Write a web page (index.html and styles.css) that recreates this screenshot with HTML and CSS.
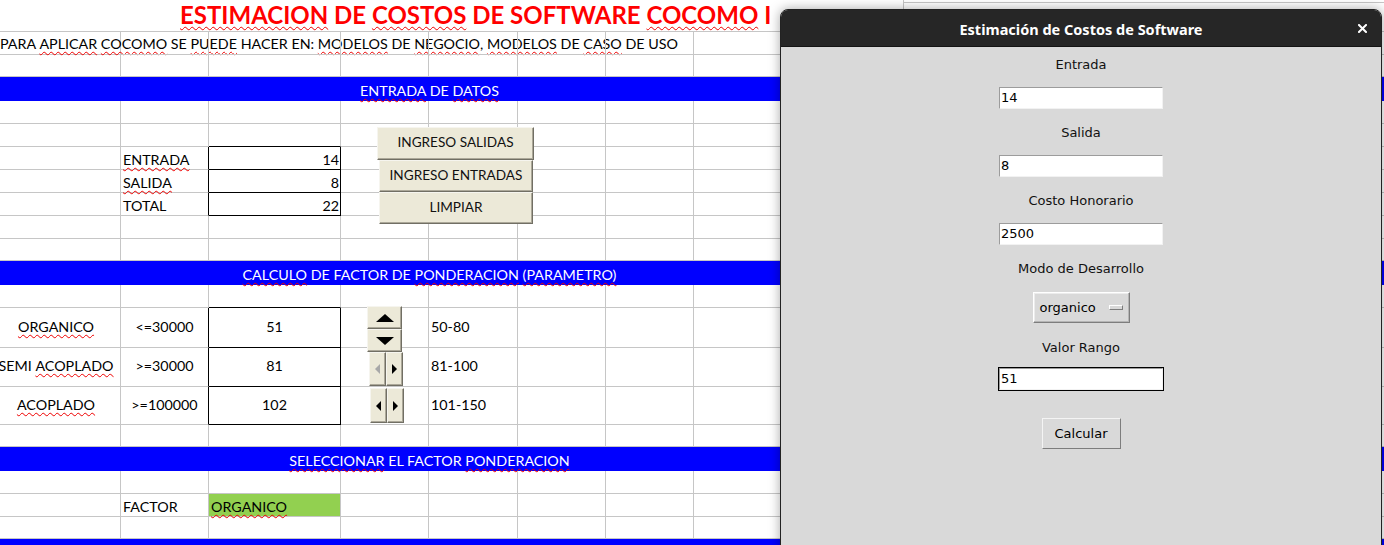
FILE: index.html
```html
<!DOCTYPE html>
<html lang="es">
<head>
<meta charset="utf-8">
<title>Estimacion de Costos de Software COCOMO I</title>
<link rel="stylesheet" href="styles.css">
</head>
<body>
<div class="screen">
  <div class="sheet">
    <div class="title-row">
      <div class="title-main"><span class="sp">ESTIMACION</span>&nbsp;DE&nbsp;<span class="sp">COSTOS</span>&nbsp;DE&nbsp;SOFTWARE&nbsp;<span class="sp">COCOMO</span>&nbsp;I</div>
      <div class="title-rest"></div>
    </div>

    <div class="row h23">
      <div class="c pl0">PARA&nbsp;<span class="sp">APLICAR</span>&nbsp;<span class="sp">COCOMO</span>&nbsp;SE&nbsp;<span class="sp">PUEDE</span>&nbsp;HACER&nbsp;EN:&nbsp;<span class="sp">MODELOS</span>&nbsp;DE&nbsp;<span class="sp">NEGOCIO</span>,&nbsp;<span class="sp">MODELOS</span>&nbsp;DE&nbsp;<span class="sp">CASO</span>&nbsp;DE&nbsp;USO</div>
      <div class="c"></div><div class="c"></div><div class="c"></div><div class="c"></div><div class="c"></div><div class="c"></div><div class="c"></div><div class="c"></div><div class="c"></div><div class="c"></div><div class="c"></div><div class="c"></div><div class="c"></div><div class="c"></div><div class="c"></div>
    </div>
    <div class="row h22">
      <div class="c"></div><div class="c"></div><div class="c"></div><div class="c"></div><div class="c"></div><div class="c"></div><div class="c"></div><div class="c"></div><div class="c"></div><div class="c"></div><div class="c"></div><div class="c"></div><div class="c"></div><div class="c"></div><div class="c"></div><div class="c"></div>
    </div>

    <div class="bar"><div class="bar-text"><span class="sp">ENTRADA</span> DE <span class="sp">DATOS</span></div></div>

    <div class="row h23">
      <div class="c"></div><div class="c"></div><div class="c"></div><div class="c"></div><div class="c"></div><div class="c"></div><div class="c"></div><div class="c"></div><div class="c"></div><div class="c"></div><div class="c"></div><div class="c"></div><div class="c"></div><div class="c"></div><div class="c"></div><div class="c"></div>
    </div>
    <div class="row h23">
      <div class="c"></div><div class="c"></div><div class="c bk-b"></div><div class="c"></div><div class="c"></div><div class="c"></div><div class="c"></div><div class="c"></div><div class="c"></div><div class="c"></div><div class="c"></div><div class="c"></div><div class="c"></div><div class="c"></div><div class="c"></div><div class="c"></div>
    </div>
    <div class="row h23">
      <div class="c"></div><div class="c bk-r"><span class="sp">ENTRADA</span></div><div class="c rt bk-r bk-b">14</div><div class="c"></div><div class="c"></div><div class="c"></div><div class="c"></div><div class="c"></div><div class="c"></div><div class="c"></div><div class="c"></div><div class="c"></div><div class="c"></div><div class="c"></div><div class="c"></div><div class="c"></div>
    </div>
    <div class="row h23">
      <div class="c"></div><div class="c bk-r"><span class="sp">SALIDA</span></div><div class="c rt bk-r bk-b">8</div><div class="c"></div><div class="c"></div><div class="c"></div><div class="c"></div><div class="c"></div><div class="c"></div><div class="c"></div><div class="c"></div><div class="c"></div><div class="c"></div><div class="c"></div><div class="c"></div><div class="c"></div>
    </div>
    <div class="row h23">
      <div class="c"></div><div class="c bk-r">TOTAL</div><div class="c rt bk-r bk-b">22</div><div class="c"></div><div class="c"></div><div class="c"></div><div class="c"></div><div class="c"></div><div class="c"></div><div class="c"></div><div class="c"></div><div class="c"></div><div class="c"></div><div class="c"></div><div class="c"></div><div class="c"></div>
    </div>
    <div class="row h23">
      <div class="c"></div><div class="c"></div><div class="c"></div><div class="c"></div><div class="c"></div><div class="c"></div><div class="c"></div><div class="c"></div><div class="c"></div><div class="c"></div><div class="c"></div><div class="c"></div><div class="c"></div><div class="c"></div><div class="c"></div><div class="c"></div>
    </div>
    <div class="row h22">
      <div class="c"></div><div class="c"></div><div class="c"></div><div class="c"></div><div class="c"></div><div class="c"></div><div class="c"></div><div class="c"></div><div class="c"></div><div class="c"></div><div class="c"></div><div class="c"></div><div class="c"></div><div class="c"></div><div class="c"></div><div class="c"></div>
    </div>

    <div class="bar"><div class="bar-text"><span class="sp">CALCULO</span> DE FACTOR DE <span class="sp">PONDERACION</span> <span class="sp">(PARAMETRO)</span></div></div>

    <div class="row h23">
      <div class="c"></div><div class="c"></div><div class="c bk-b"></div><div class="c"></div><div class="c"></div><div class="c"></div><div class="c"></div><div class="c"></div><div class="c"></div><div class="c"></div><div class="c"></div><div class="c"></div><div class="c"></div><div class="c"></div><div class="c"></div><div class="c"></div>
    </div>
    <div class="row h40">
      <div class="c mid ca"><span class="sp">ORGANICO</span></div><div class="c mid ctr bk-r">&lt;=30000</div><div class="c mid ctr bk-r bk-b">51</div><div class="c"></div><div class="c mid">50-80</div><div class="c"></div><div class="c"></div><div class="c"></div><div class="c"></div><div class="c"></div><div class="c"></div><div class="c"></div><div class="c"></div><div class="c"></div><div class="c"></div><div class="c"></div>
    </div>
    <div class="row h39">
      <div class="c mid ca">SEMI&nbsp;<span class="sp">ACOPLADO</span></div><div class="c mid ctr bk-r">&gt;=30000</div><div class="c mid ctr bk-r bk-b">81</div><div class="c"></div><div class="c mid">81-100</div><div class="c"></div><div class="c"></div><div class="c"></div><div class="c"></div><div class="c"></div><div class="c"></div><div class="c"></div><div class="c"></div><div class="c"></div><div class="c"></div><div class="c"></div>
    </div>
    <div class="row h38">
      <div class="c mid ca"><span class="sp">ACOPLADO</span></div><div class="c mid ctr bk-r">&gt;=100000</div><div class="c mid ctr bk-r bk-b">102</div><div class="c"></div><div class="c mid">101-150</div><div class="c"></div><div class="c"></div><div class="c"></div><div class="c"></div><div class="c"></div><div class="c"></div><div class="c"></div><div class="c"></div><div class="c"></div><div class="c"></div><div class="c"></div>
    </div>
    <div class="row h22">
      <div class="c"></div><div class="c"></div><div class="c"></div><div class="c"></div><div class="c"></div><div class="c"></div><div class="c"></div><div class="c"></div><div class="c"></div><div class="c"></div><div class="c"></div><div class="c"></div><div class="c"></div><div class="c"></div><div class="c"></div><div class="c"></div>
    </div>

    <div class="bar"><div class="bar-text"><span class="sp">SELECCIONAR</span> EL FACTOR <span class="sp">PONDERACION</span></div></div>

    <div class="row h23">
      <div class="c"></div><div class="c"></div><div class="c"></div><div class="c"></div><div class="c"></div><div class="c"></div><div class="c"></div><div class="c"></div><div class="c"></div><div class="c"></div><div class="c"></div><div class="c"></div><div class="c"></div><div class="c"></div><div class="c"></div><div class="c"></div>
    </div>
    <div class="row h23">
      <div class="c"></div><div class="c">FACTOR</div><div class="c green"><span class="sp">ORGANICO</span></div><div class="c"></div><div class="c"></div><div class="c"></div><div class="c"></div><div class="c"></div><div class="c"></div><div class="c"></div><div class="c"></div><div class="c"></div><div class="c"></div><div class="c"></div><div class="c"></div><div class="c"></div>
    </div>
    <div class="row h22">
      <div class="c"></div><div class="c"></div><div class="c"></div><div class="c"></div><div class="c"></div><div class="c"></div><div class="c"></div><div class="c"></div><div class="c"></div><div class="c"></div><div class="c"></div><div class="c"></div><div class="c"></div><div class="c"></div><div class="c"></div><div class="c"></div>
    </div>

    <div class="bar"><div class="bar-text"></div></div>

    <!-- floating form controls -->
    <div class="xbtn b1">INGRESO SALIDAS</div>
    <div class="xbtn b2">INGRESO ENTRADAS</div>
    <div class="xbtn b3">LIMPIAR</div>

    <div class="spin">
      <div class="sbtn"><svg width="18" height="8" viewBox="0 0 18 8"><polygon points="9,0 18,8 0,8" fill="#000"/></svg></div>
      <div class="sbtn"><svg width="18" height="8" viewBox="0 0 18 8"><polygon points="0,0 18,0 9,8" fill="#000"/></svg></div>
    </div>
    <div class="hscroll hs1">
      <div class="sbtn"><svg width="5" height="10" viewBox="0 0 5 10"><polygon points="5,0 5,10 0,5" fill="#a8a8a8"/></svg></div>
      <div class="sbtn"><svg width="5" height="10" viewBox="0 0 5 10"><polygon points="0,0 5,5 0,10" fill="#000"/></svg></div>
    </div>
    <div class="hscroll hs2">
      <div class="sbtn"><svg width="5" height="10" viewBox="0 0 5 10"><polygon points="5,0 5,10 0,5" fill="#000"/></svg></div>
      <div class="sbtn"><svg width="5" height="10" viewBox="0 0 5 10"><polygon points="0,0 5,5 0,10" fill="#000"/></svg></div>
    </div>
  </div>

  <div class="dialog">
    <div class="dlg-head">
      <span class="dlg-title">Estimación de Costos de Software</span>
      <span class="dlg-close"><svg width="9" height="9" viewBox="0 0 9 9"><path d="M1 1 L8 8 M8 1 L1 8" stroke="#fff" stroke-width="2" stroke-linecap="square"/></svg></span>
    </div>
    <div class="dlg-body">
      <div class="lbl">Entrada</div>
      <div class="entry"><div class="field">14</div></div>
      <div class="lbl">Salida</div>
      <div class="entry"><div class="field">8</div></div>
      <div class="lbl">Costo Honorario</div>
      <div class="entry"><div class="field">2500</div></div>
      <div class="lbl">Modo de Desarrollo</div>
      <div class="optmenu"><span>organico</span><span class="ind"></span></div>
      <div class="lbl lbl-valor">Valor Rango</div>
      <div class="entry focus"><div class="field">51</div></div>
      <div class="tkbtn">Calcular</div>
    </div>
  </div>
</div>
</body>
</html>
```

FILE: styles.css
```css
html, body {
  margin: 0;
  padding: 0;
  overflow: hidden;
  background: #ffffff;
}

.screen {
  position: relative;
  width: 1384px;
  height: 545px;
  overflow: hidden;
  font-family: Lato, "Liberation Sans", sans-serif;
}

/* ---------- spreadsheet ---------- */
.sheet {
  position: relative;
  font-size: 14.3px;
  color: #000;
}

.title-row {
  height: 32px;
  box-sizing: border-box;
  border-bottom: 1px solid #c6c6c6;
  display: flex;
}

.title-main {
  width: 903px;
  box-sizing: border-box;
  padding-left: 180px;
  padding-bottom: 2px;
  display: flex;
  align-items: center;
  color: #ff0000;
  font-weight: 700;
  font-size: 24px;
  white-space: nowrap;
}

.title-rest {
  flex: 1;
  border-left: 1px solid #c6c6c6;
  background: linear-gradient(#c6c6c6, #c6c6c6) 0 2px / 100% 1px no-repeat;
}

.row {
  display: grid;
  grid-template-columns: 121px 88px 132px 88px 89px 88px 88px 88px repeat(8, 88px);
}

.h22 { height: 22px; }
.h23 { height: 23px; }
.h38 { height: 38px; }
.h39 { height: 39px; }
.h40 { height: 40px; }

.c {
  box-sizing: border-box;
  border-right: 1px solid #c6c6c6;
  border-bottom: 1px solid #c6c6c6;
  display: flex;
  align-items: flex-end;
  padding: 0 2px 1px 2px;
  white-space: nowrap;
  min-width: 0;
  line-height: 1.2;
}

.pl0 { padding-left: 0; padding-bottom: 2px; }
.mid { align-items: center; padding-bottom: 2px; }
.ctr { justify-content: center; }
.rt { justify-content: flex-end; padding-right: 1px; }
.ca { justify-content: center; padding-right: 10px; }
.bk-r { border-right-color: #000; }
.bk-b { border-bottom-color: #000; }
.green { background: #92d050; }

.sp {
  text-decoration: underline wavy #ee0000;
  text-decoration-thickness: 1px;
  text-underline-offset: 2px;
  text-decoration-skip-ink: none;
}

.bar {
  height: 24px;
  box-sizing: border-box;
  padding-bottom: 2px;
  background: #0000ff;
  color: #ffffff;
  display: flex;
  align-items: flex-end;
  line-height: 1.2;
}

.bar-text {
  width: 859px;
  text-align: center;
  white-space: nowrap;
}

/* floating form controls on the sheet */
.xbtn {
  position: absolute;
  box-sizing: border-box;
  background: #ece9d8;
  border: 1px solid;
  border-color: #f6f5ef #716f64 #716f64 #f6f5ef;
  box-shadow: inset -1px -1px 0 #aca899;
  display: flex;
  align-items: center;
  justify-content: center;
  color: #111;
  font-size: 13.6px;
  padding-bottom: 3px;
  white-space: nowrap;
}

.b1 { left: 377px; top: 127px; width: 157px; height: 33px; }
.b2 { left: 379px; top: 160px; width: 154px; height: 32px; }
.b3 { left: 379px; top: 192px; width: 154px; height: 32px; }

.sbtn {
  box-sizing: border-box;
  background: #ece9d8;
  border: 1px solid;
  border-color: #f6f5ef #716f64 #716f64 #f6f5ef;
  box-shadow: inset -1px -1px 0 #aca899;
  display: flex;
  align-items: center;
  justify-content: center;
}

.spin {
  position: absolute;
  left: 367px;
  top: 306px;
  width: 35px;
  height: 46px;
  display: flex;
  flex-direction: column;
}

.spin .sbtn { flex: 1; }

.hscroll {
  position: absolute;
  display: flex;
}

.hscroll .sbtn { flex: 1; }

.hs1 { left: 369px; top: 352px; width: 34px; height: 34px; }
.hs2 { left: 370px; top: 388px; width: 34px; height: 35px; }

/* ---------- Tk dialog ---------- */
.dialog {
  position: absolute;
  left: 780px;
  top: 9px;
  width: 602px;
  height: 560px;
  box-sizing: border-box;
  border: 1px solid #222;
  border-radius: 8px 8px 0 0;
  background: #d9d9d9;
  overflow: hidden;
  box-shadow: 0 0 12px rgba(0, 0, 0, 0.35);
  font-family: "DejaVu Sans", sans-serif;
}

.dlg-head {
  position: relative;
  height: 37px;
  box-sizing: border-box;
  background: #262626;
  border-bottom: 1px solid #141414;
  display: flex;
  align-items: center;
  justify-content: center;
}

.dlg-title {
  color: #ffffff;
  font-family: "Noto Sans", sans-serif;
  font-weight: 700;
  font-size: 14.5px;
  padding-top: 1px;
}

.dlg-close {
  position: absolute;
  right: 14px;
  top: 14px;
  width: 9px;
  height: 9px;
  display: flex;
}

.dlg-body {
  display: flex;
  flex-direction: column;
  align-items: center;
  padding-top: 7px;
  color: #111;
  font-size: 13px;
}

.lbl {
  line-height: 22px;
  height: 20px;
  white-space: nowrap;
}

.entry {
  width: 166px;
  height: 24px;
  box-sizing: border-box;
  border: 1px solid #d9d9d9;
  margin: 12px 0;
}

.entry.focus {
  border-color: #000;
  margin-top: 10px;
  margin-bottom: 0;
}

.field {
  height: 100%;
  box-sizing: border-box;
  background: #fff;
  border: 1px solid;
  border-color: #9c9c9c #f2f2f2 #f2f2f2 #9c9c9c;
  padding-left: 1px;
  line-height: 20px;
  font-size: 13px;
  color: #000;
}

.optmenu {
  margin-top: 14px;
  width: 97px;
  height: 31px;
  box-sizing: border-box;
  border: 1px solid;
  border-color: #ffffff #7d7d7d #7d7d7d #ffffff;
  box-shadow: inset -1px -1px 0 #b5b5b5, inset 1px 1px 0 #ececec;
  display: flex;
  align-items: center;
  padding: 0 6px 1px 6px;
  color: #000;
}

.ind {
  margin-left: auto;
  width: 14px;
  height: 5px;
  box-sizing: border-box;
  border: 1px solid;
  border-color: #ffffff #7d7d7d #7d7d7d #ffffff;
}

.lbl-valor { margin-top: 14px; }

.tkbtn {
  margin-top: 27px;
  width: 79px;
  height: 31px;
  box-sizing: border-box;
  border: 1px solid;
  border-color: #f4f4f4 #7d7d7d #7d7d7d #f4f4f4;
  display: flex;
  align-items: center;
  justify-content: center;
  color: #000;
}
```
